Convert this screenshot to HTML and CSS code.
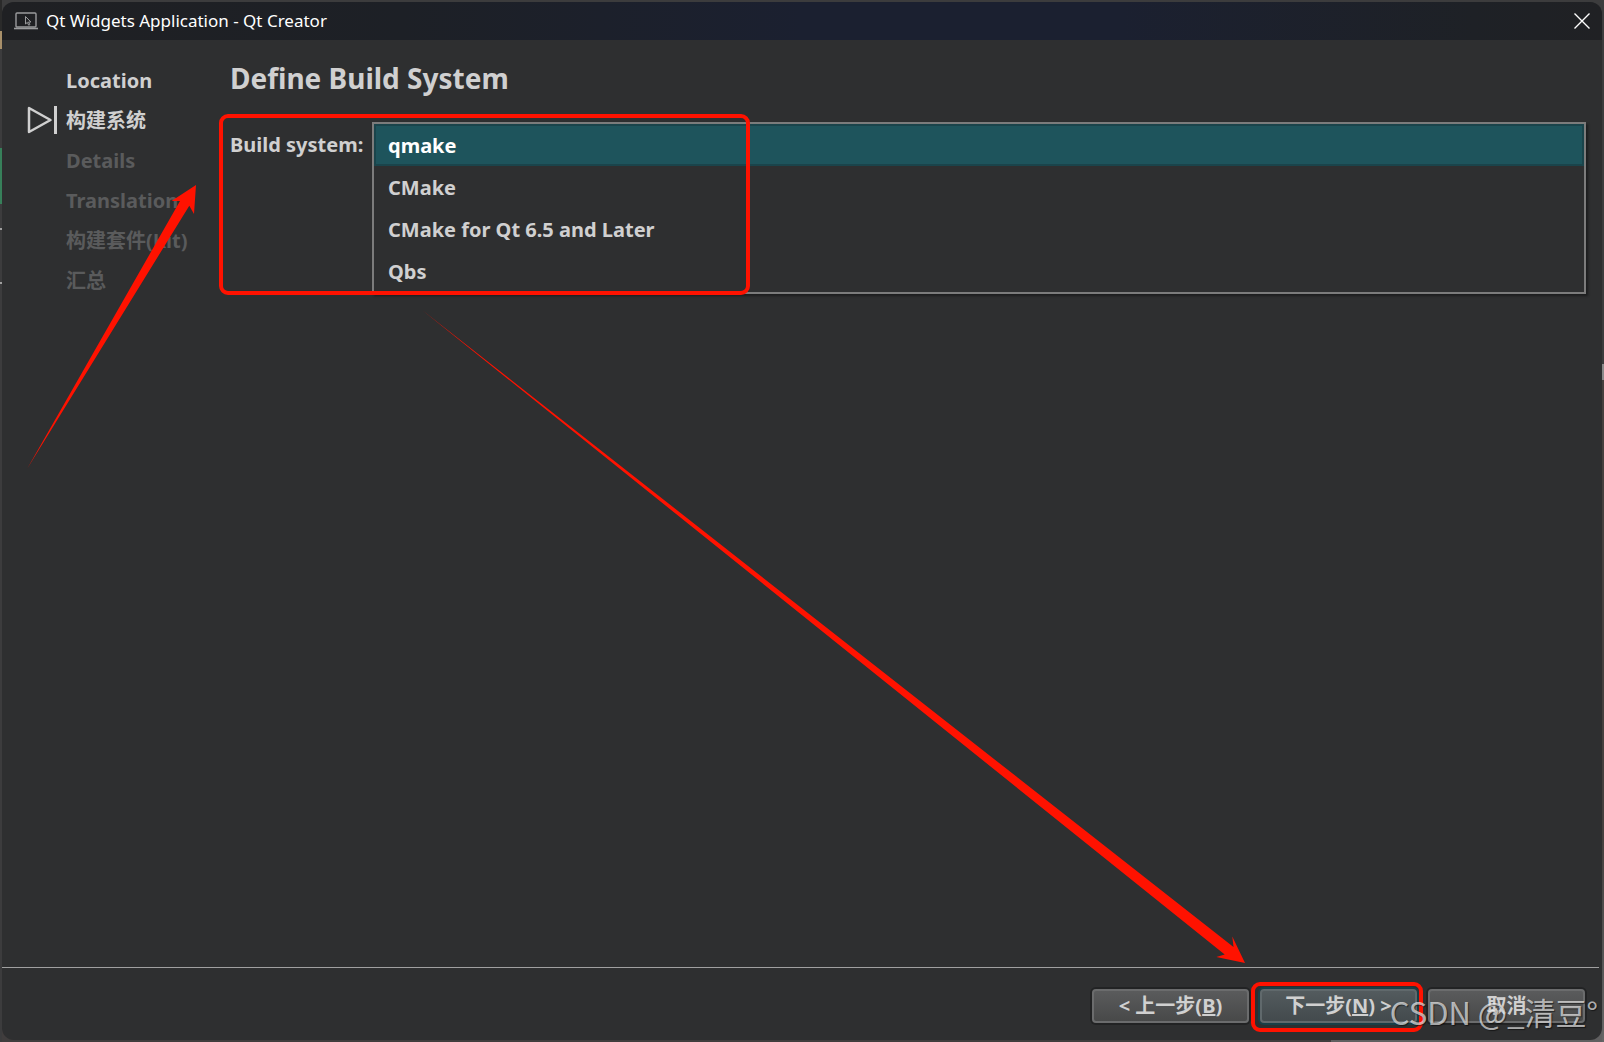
FILE: index.html
```html
<!DOCTYPE html>
<html lang="zh-CN">
<head>
<meta charset="utf-8">
<title>Qt Widgets Application - Qt Creator</title>
<link rel="stylesheet" href="styles.css">
</head>
<body>
<main class="window">
  <header class="titlebar">
    <svg class="app-icon" width="24" height="18" viewBox="0 0 24 18" fill="none" stroke="#9a9b9d">
      <rect x="2" y="1" width="20" height="14" rx="1" stroke-width="1.4"/>
      <path d="M0 16.5h24" stroke-width="1.6"/>
      <path d="M11.5 4.500v7.500l1.800-1.600 1.400 2.800 1.200-.6-1.400-2.600h2.400z" stroke-width="1"/>
    </svg>
    <h1 class="title">Qt Widgets Application - Qt Creator</h1>
    <button class="close" type="button" aria-label="Close">
      <svg width="16" height="16" viewBox="0 0 16 16" stroke="#fff" stroke-width="1.400"><path d="M.5.5l15 15M15.500.5l-15 15"/></svg>
    </button>
  </header>
  <div class="wizard">
    <ol class="steps">
      <li class="step">Location</li>
      <li class="step current">
        <svg class="marker" width="30" height="28" viewBox="0 0 30 28" fill="none" stroke="#d0d0d0" stroke-width="2.500" stroke-linejoin="round"><path d="M2 2v24L23.500 14z"/><path d="M28.500 0v28" stroke-width="3"/></svg>
        构建系统</li>
      <li class="step pending">Details</li>
      <li class="step pending">Translation</li>
      <li class="step pending">构建套件(Kit)</li>
      <li class="step pending">汇总</li>
    </ol>
    <section class="page">
      <h2 class="heading">Define Build System</h2>
      <div class="field">
        <label class="label" for="build-system">Build system:</label>
        <select class="list" id="build-system" size="4">
          <option class="item selected">qmake</option>
          <option class="item">CMake</option>
          <option class="item">CMake for Qt 6.5 and Later</option>
          <option class="item">Qbs</option>
        </select>
        <span class="frame frame-field"></span>
      </div>
    </section>
  </div>
  <footer class="actions">
    <button class="button" type="button">&lt; 上一步(<u>B</u>)</button>
    <span class="next">
      <button class="button primary" type="button">下一步(<u>N</u>) &gt;</button>
      <span class="frame frame-next"></span>
    </span>
    <button class="button" type="button">取消</button>
  </footer>
  <svg class="arrows" width="1604" height="1042" viewBox="0 0 1604 1042" fill="#ff1200">
    <path d="M27 469L180 201h-8.500L196 185l-2 29-4.700-8.300z"/>
    <path d="M422 310L1233.500 947l-1.200-10.500L1245 963l-28.700-6 8.400-2.500z"/>
  </svg>
  <p class="watermark">CSDN @_清豆°</p>
</main>
</body>
</html>
```
FILE: styles.css
```css
* { box-sizing: border-box; }
html, body { height: 100%; }
body {
  margin: 0;
  padding: 2px;
  background:
    linear-gradient(#2a2a2a 31px, #a8906a 31px 49px, #3c3c3d 49px 148px, #37805a 148px 204px, #3c3c3d 204px 228px, #a0a0a0 228px 230px, #3c3c3d 230px 282px, #a0a0a0 282px 284px, #3c3c3d 284px) left top / 2px 100% no-repeat,
    linear-gradient(#3c3c3d 364px, #8a8a8a 364px 380px, #45403e 380px 840px, #555 960px, #666) right top / 2px 100% no-repeat,
    linear-gradient(90deg, #403d3d 83%, #605f60 83%) left bottom / 100% 20px no-repeat,
    #3c3c3d;
  font-family: "Noto Sans", "Noto Sans CJK SC", sans-serif;
  color: #d0d0d0;
}
.window {
  position: relative;
  display: flex;
  flex-direction: column;
  height: 100%;
  border-radius: 12px;
  background: #2e2f30;
}
.titlebar {
  display: flex;
  align-items: center;
  height: 38px;
  padding: 0 12px;
  border-radius: 12px 12px 0 0;
  background: linear-gradient(90deg, #1f2023, #1d2026 25%, #1b2030 50%, #1b2030 70%, #1e2126 92%, #202124);
}
.title {
  flex: 1;
  margin: 0 0 0 8px;
  font-size: 17px;
  font-weight: 400;
  line-height: 24px;
  color: #fff;
}
.close { display: flex; padding: 0; border: 0; background: none; }
.wizard {
  flex: 1;
  display: flex;
  padding: 21px 16px 0 64px;
}
.steps {
  flex: 0 0 164px;
  margin: 0;
  padding: 0;
  list-style: none;
  font-size: 20px;
  font-weight: 700;
  line-height: 40px;
}
.step { position: relative; height: 40px; white-space: nowrap; }
.pending { color: #5a5b5c; }
.marker { position: absolute; left: -39px; top: 5px; }
.page { flex: 1; min-width: 0; }
.heading { margin: 0 0 27px; font-size: 28px; line-height: 34px; }
.field { position: relative; display: flex; align-items: flex-start; gap: 8px; }
.label { flex: 0 0 134px; font-size: 20px; font-weight: 700; line-height: 46px; white-space: nowrap; }
.list {
  flex: 1;
  height: 172px;
  padding: 0;
  overflow: hidden;
  border: 2px solid #7c7c7c;
  border-radius: 0;
  outline: 0;
  background: #2e2f30;
  color: #d0d0d0;
  font: 700 20px/28px "Noto Sans", sans-serif;
  box-shadow: 2px 2px 2px #1c1d1e;
}
.item { height: 42px; padding: 8px 14px 6px; font-weight: 700; }
.selected { border: 2px solid #1a444b; padding: 6px 12px 4px; background: #1e545c; color: #fff; }
.frame { position: absolute; border: 4px solid #ff1200; border-radius: 9px; pointer-events: none; }
.frame-field { left: -11px; top: -8px; width: 531px; height: 181px; }
.frame-next { inset: -7px -6px -9px -9px; }
.actions {
  display: flex;
  justify-content: flex-end;
  gap: 11px;
  margin-right: 3px;
  padding: 21px 14px 17px 0;
  border-top: 1px solid #a0a0a0;
}
.next { position: relative; display: flex; }
.button {
  width: 157px;
  height: 34px;
  padding: 0;
  border: 2px solid #6b6c6d;
  border-radius: 4px;
  background: linear-gradient(#5a5b5c, #484949);
  box-shadow: 0 0 0 2px #222324;
  color: #d0d0d0;
  font: 700 20px/30px "Noto Sans", "Noto Sans CJK SC", sans-serif;
}
.primary { background: linear-gradient(#535b5e, #434a4d); border-color: #60696c; box-shadow: 0 0 0 2px #193f47; }
.arrows { position: absolute; left: -2px; top: -2px; pointer-events: none; }
.watermark {
  position: absolute;
  right: 4px;
  bottom: 6px;
  margin: 0;
  font: 400 31px/44px "Noto Sans CJK SC", sans-serif;
  color: rgba(255, 255, 255, .65);
  text-shadow: 1px 1px 1px rgba(0, 0, 0, .5);
  white-space: nowrap;
}
```
